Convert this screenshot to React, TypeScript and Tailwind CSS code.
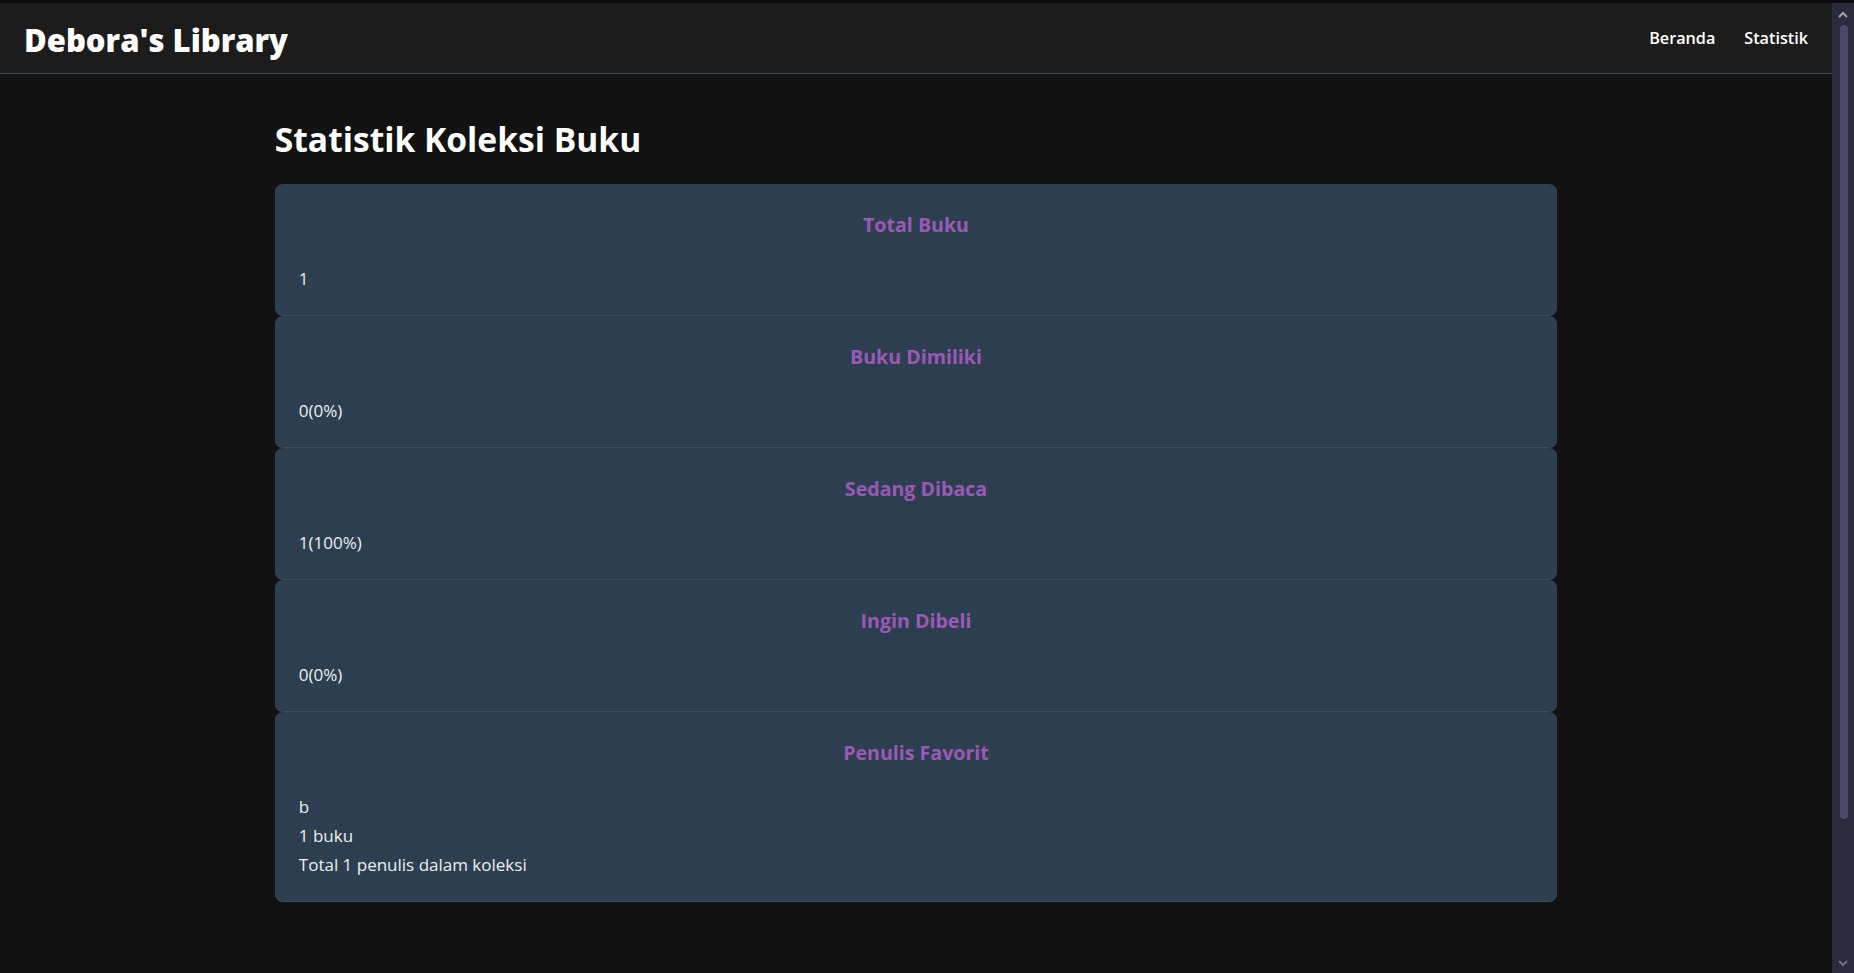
import React from "react";

type Stat = {
    title: string;
    lines: string[];
};

const stats: Stat[] = [
    { title: "Total Buku", lines: ["1"] },
    { title: "Buku Dimiliki", lines: ["0(0%)"] },
    { title: "Sedang Dibaca", lines: ["1(100%)"] },
    { title: "Ingin Dibeli", lines: ["0(0%)"] },
    { title: "Penulis Favorit", lines: ["b", "1 buku", "Total 1 penulis dalam koleksi"] },
];

const StatCard = ({ title, lines }: Stat) => {
    return (
        <div className="bg-[#2c3e50] rounded-[8px] pt-[26px] pb-[22px] px-6 shadow-[0_1px_0_#3a4c5f]">
            <h3 className="text-center text-[19.6px] leading-[30px] font-bold text-[#9b59b6]">
                {title}
            </h3>
            <div className="mt-6">
                {lines.map((line, i) => (
                    <p key={i} className="text-[17px] leading-[29px] text-[#ecf0f1]">
                        {line}
                    </p>
                ))}
            </div>
        </div>
    );
};

// scrollbar palsu di kanan, sesuai screenshot
const FakeScrollbar = () => {
    return (
        <div className="w-[22px] bg-[#2a2b3c] flex flex-col items-center">
            <svg width="10" height="8" viewBox="0 0 10 8" className="mt-[8px]">
                <path d="M1 6 L5 2 L9 6" stroke="#a3a4b4" strokeWidth="2" fill="none" />
            </svg>
            <div className="w-[8px] h-[794px] mt-[6px] ml-[1px] rounded-full bg-[#4a4b68]" />
            <div className="flex-1" />
            <svg width="10" height="8" viewBox="0 0 10 8" className="mb-[6px]">
                <path d="M1 2 L5 6 L9 2" stroke="#6e6f80" strokeWidth="2" fill="none" />
            </svg>
        </div>
    );
};

const App = () => {
    return (
        <div className="h-screen overflow-hidden flex flex-col bg-[#121212] font-['Open_Sans','Noto_Sans',sans-serif]">
            <div className="h-[3px] bg-[#0c0c10]" />
            <div className="flex flex-1 min-h-0">
                <div className="flex-1 flex flex-col">
                    {/** header */}
                    <header className="h-[71px] flex items-center justify-between px-6 bg-[#1c1c1c] border-b border-[#34495e]">
                        <h1 className="pt-[3px] text-[31px] leading-[40px] font-extrabold text-white">
                            Debora's Library
                        </h1>
                        <nav className="flex items-center gap-[29px]">
                            <a className="text-[16.2px] font-semibold text-white">Beranda</a>
                            <a className="text-[16.2px] font-semibold text-white">Statistik</a>
                        </nav>
                    </header>

                    {/** konten */}
                    <main className="w-[70%] mx-auto">
                        <h2 className="mt-[44px] text-[33.6px] leading-[43px] font-bold text-white">
                            Statistik Koleksi Buku
                        </h2>
                        <div className="mt-[23px] flex flex-col gap-[1px]">
                            {stats.map((s) => (
                                <StatCard key={s.title} title={s.title} lines={s.lines} />
                            ))}
                        </div>
                    </main>
                </div>
                <FakeScrollbar />
            </div>
        </div>
    );
};

export default App;
